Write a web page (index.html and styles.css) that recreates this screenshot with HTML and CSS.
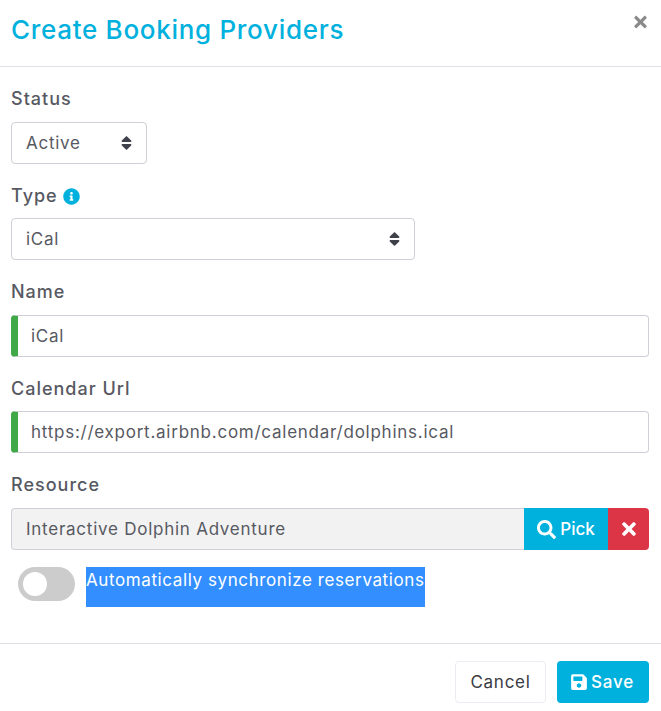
FILE: index.html
```html
<!DOCTYPE html>
<html lang="en">
<head>
<meta charset="utf-8">
<title>Create Booking Providers</title>
<link rel="stylesheet" href="styles.css">
</head>
<body>
<div class="modal">
  <header class="modal-header">
    <h1 class="modal-title">Create Booking Providers</h1>
    <svg class="close-icon" viewBox="0 0 352 512"><path d="M242.72 256l100.07-100.07c12.28-12.28 12.28-32.19 0-44.48l-22.24-22.24c-12.28-12.28-32.19-12.28-44.48 0L176 189.28 75.93 89.21c-12.28-12.28-32.19-12.28-44.48 0L9.21 111.45c-12.28 12.28-12.28 32.19 0 44.48L109.28 256 9.21 356.07c-12.28 12.28-12.28 32.19 0 44.48l22.24 22.24c12.28 12.28 32.2 12.28 44.48 0L176 322.72l100.07 100.07c12.28 12.28 32.2 12.28 44.48 0l22.24-22.24c12.28-12.28 12.28-32.19 0-44.48L242.72 256z"/></svg>
  </header>
  <main class="modal-body">
    <div class="field">
      <label class="label">Status</label>
      <div class="control select select-status">
        <span class="value">Active</span>
        <svg class="sort-icon" viewBox="0 0 320 512"><path d="M41 288h238c21.4 0 32.1 25.9 17 41L177 448c-9.4 9.4-24.6 9.4-33.9 0L24 329c-15.1-15.1-4.4-41 17-41zm255-105L177 64c-9.4-9.4-24.6-9.4-33.9 0L24 183c-15.1 15.1-4.4 41 17 41h238c21.4 0 32.1-25.9 17-41z"/></svg>
      </div>
    </div>
    <div class="field">
      <label class="label label-tight">Type
        <svg class="info-icon" viewBox="0 0 512 512"><path d="M256 8C119.043 8 8 119.083 8 256c0 136.997 111.043 248 248 248s248-111.003 248-248C504 119.083 392.957 8 256 8zm0 110c23.196 0 42 18.804 42 42s-18.804 42-42 42-42-18.804-42-42 18.804-42 42-42zm56 254c0 6.627-5.373 12-12 12h-88c-6.627 0-12-5.373-12-12v-24c0-6.627 5.373-12 12-12h12v-64h-12c-6.627 0-12-5.373-12-12v-24c0-6.627 5.373-12 12-12h64c6.627 0 12 5.373 12 12v100h12c6.627 0 12 5.373 12 12v24z"/></svg>
      </label>
      <div class="control select select-type">
        <span class="value">iCal</span>
        <svg class="sort-icon" viewBox="0 0 320 512"><path d="M41 288h238c21.4 0 32.1 25.9 17 41L177 448c-9.4 9.4-24.6 9.4-33.9 0L24 329c-15.1-15.1-4.4-41 17-41zm255-105L177 64c-9.4-9.4-24.6-9.4-33.9 0L24 183c-15.1 15.1-4.4 41 17 41h238c21.4 0 32.1-25.9 17-41z"/></svg>
      </div>
    </div>
    <div class="field">
      <label class="label">Name</label>
      <div class="control valid"><span class="value">iCal</span></div>
    </div>
    <div class="field">
      <label class="label label-tight">Calendar Url</label>
      <div class="control valid"><span class="value">https://export.airbnb.com/calendar/dolphins.ical</span></div>
    </div>
    <div class="field">
      <label class="label">Resource</label>
      <div class="input-group">
        <div class="control readonly"><span class="value">Interactive Dolphin Adventure</span></div>
        <button class="btn btn-pick">
          <svg class="btn-icon pick-icon" viewBox="0 0 512 512"><path d="M505 442.7L405.3 343c-4.5-4.5-10.6-7-17-7H372c27.6-35.3 44-79.7 44-128C416 93.1 322.9 0 208 0S0 93.1 0 208s93.1 208 208 208c48.3 0 92.7-16.4 128-44v16.3c0 6.4 2.5 12.5 7 17l99.7 99.7c9.4 9.4 24.6 9.4 33.9 0l28.3-28.3c9.4-9.4 9.4-24.6.1-34zM208 336c-70.7 0-128-57.2-128-128 0-70.7 57.2-128 128-128 70.7 0 128 57.2 128 128 0 70.7-57.2 128-128 128z"/></svg>Pick
        </button>
        <button class="btn btn-clear">
          <svg class="clear-icon" viewBox="0 0 352 512"><path d="M242.72 256l100.07-100.07c12.28-12.28 12.28-32.19 0-44.48l-22.24-22.24c-12.28-12.28-32.19-12.28-44.48 0L176 189.28 75.93 89.21c-12.28-12.28-32.19-12.28-44.48 0L9.21 111.45c-12.28 12.28-12.28 32.19 0 44.48L109.28 256 9.21 356.07c-12.28 12.28-12.28 32.19 0 44.48l22.24 22.24c12.28 12.28 32.2 12.28 44.48 0L176 322.72l100.07 100.07c12.28 12.28 32.2 12.28 44.48 0l22.24-22.24c12.28-12.28 12.28-32.19 0-44.48L242.72 256z"/></svg>
        </button>
      </div>
    </div>
    <div class="switch-row">
      <span class="switch"><span class="knob"></span></span>
      <div class="switch-label">Automatically synchronize reservations</div>
    </div>
  </main>
  <footer class="modal-footer">
    <button class="btn btn-cancel">Cancel</button>
    <button class="btn btn-save">
      <svg class="btn-icon" viewBox="0 0 448 512"><path d="M433.941 129.941l-83.882-83.882A48 48 0 0 0 316.118 32H48C21.49 32 0 53.49 0 80v352c0 26.51 21.49 48 48 48h352c26.51 0 48-21.49 48-48V163.882a48 48 0 0 0-14.059-33.941zM224 416c-35.346 0-64-28.654-64-64 0-35.346 28.654-64 64-64s64 28.654 64 64c0 35.346-28.654 64-64 64zm96-304.52V212c0 6.627-5.373 12-12 12H76c-6.627 0-12-5.373-12-12V108c0-6.627 5.373-12 12-12h228.52c3.183 0 6.235 1.264 8.485 3.515l3.48 3.48A11.996 11.996 0 0 1 320 111.48z"/></svg>Save
    </button>
  </footer>
</div>
</body>
</html>
```

FILE: styles.css
```css
* { box-sizing: border-box; }

html, body {
  margin: 0;
  padding: 0;
  background: #fff;
}

body {
  font-family: "Inter", "Liberation Sans", sans-serif;
  font-size: 17px;
  letter-spacing: 0.75px;
  line-height: 24px;
  color: #575962;
}

.modal {
  width: 661px;
  height: 711px;
  display: flex;
  flex-direction: column;
}

.modal-header {
  height: 67px;
  padding: 0 14px 0 11px;
  border-bottom: 1px solid #dee2e6;
  display: flex;
  justify-content: space-between;
  flex-shrink: 0;
}

.modal-title {
  margin: 12px 0 0;
  font-size: 26px;
  letter-spacing: 0.7px;
  line-height: 36px;
  font-weight: 500;
  color: #00b1dd;
}

.close-icon {
  width: 13px;
  height: 18px;
  margin: 13px 0 0 0;
  fill: #8a8a8a;
}

.modal-body {
  padding: 19px 12px 0 11px;
  height: 576px;
  flex-shrink: 0;
}

.field { margin-bottom: 19px; }

.label {
  display: flex;
  align-items: center;
  gap: 5px;
  height: 24px;
  padding-top: 2px;
  margin-bottom: 12px;
  font-size: 18px;
  letter-spacing: 1px;
  font-weight: 500;
}

.label-tight { margin-bottom: 11px; }

.control {
  height: 42px;
  border: 1px solid #cdd0d6;
  border-radius: 4px;
  padding: 0 14px;
  display: flex;
  align-items: center;
  justify-content: space-between;
  background: #fff;
}

.select-status { width: 136px; }
.select-type { width: 404px; }

.sort-icon {
  width: 11px;
  height: 18px;
  fill: #3f414a;
}

.info-icon {
  width: 17px;
  height: 17px;
  fill: #00b1dd;
}

.valid {
  border-left: 7px solid #3fa94a;
  padding-left: 13px;
}

.input-group { display: flex; }

.readonly {
  flex: 1;
  background: #f2f2f2;
  border-radius: 4px 0 0 4px;
  border-right: 0;
}

.btn {
  border: 0;
  height: 42px;
  font: inherit;
  letter-spacing: 0.75px;
  font-weight: 500;
  display: inline-flex;
  align-items: center;
  justify-content: center;
  padding: 0;
  color: #fff;
}

.btn-pick {
  width: 84px;
  background: #00b1dd;
  letter-spacing: 0;
}

.btn-clear {
  width: 41px;
  background: #dc3545;
  border-radius: 0 4px 4px 0;
}

.btn-icon {
  width: 18px;
  height: 18px;
  fill: #fff;
  margin-right: 3px;
}

.pick-icon {
  width: 19px;
  height: 19px;
  margin-right: 4px;
}

.clear-icon {
  width: 14px;
  height: 20px;
  fill: #fff;
}

.switch-row {
  display: flex;
  align-items: flex-start;
  gap: 11px;
  margin-top: -2px;
  padding-left: 7px;
}

.switch {
  width: 57px;
  height: 34px;
  border-radius: 17px;
  background: #ccc;
  padding: 5px 0 0 5px;
  flex-shrink: 0;
}

.knob {
  display: block;
  width: 24px;
  height: 24px;
  border-radius: 50%;
  background: #fff;
}

.switch-label {
  width: 339px;
  height: 40px;
  background: #338fff;
  color: #fff;
  line-height: 26px;
  letter-spacing: 0.6px;
  white-space: nowrap;
}

.modal-footer {
  border-top: 1px solid #dee2e6;
  padding-top: 17px;
  padding-right: 12px;
  display: flex;
  justify-content: flex-end;
  gap: 11px;
  flex: 1;
}

.btn-cancel {
  width: 91px;
  background: #fff;
  border: 1px solid #ebedf2;
  border-radius: 4px;
  color: #3a3b42;
  font-weight: 400;
}

.btn-save {
  width: 92px;
  background: #00b1dd;
  border-radius: 4px;
  padding-right: 2px;
}
```
